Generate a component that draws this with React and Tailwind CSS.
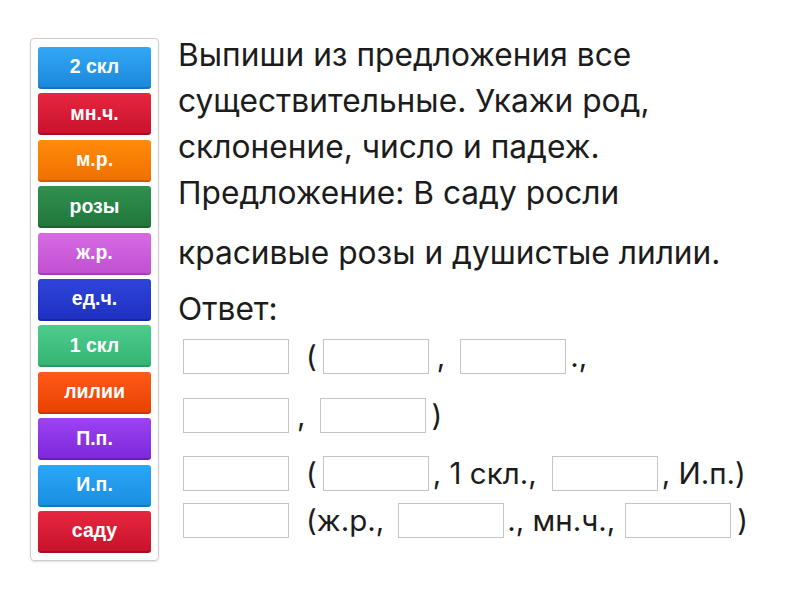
import React from "react";

const tiles = [
  { t: "2 скл", c: "bg-gradient-to-b from-[#33a8f5] to-[#1b88dc] border-[#1672bd]" },
  { t: "мн.ч.", c: "bg-gradient-to-b from-[#e8263f] to-[#c9122d] border-[#a80c24]" },
  { t: "м.р.", c: "bg-gradient-to-b from-[#ff8c0a] to-[#f07000] border-[#cc5e00]" },
  { t: "розы", c: "bg-gradient-to-b from-[#2f9150] to-[#22773c] border-[#1b6231]" },
  { t: "ж.р.", c: "bg-gradient-to-b from-[#d76ae4] to-[#c150d2] border-[#a63db6]" },
  { t: "ед.ч.", c: "bg-gradient-to-b from-[#2e44da] to-[#1f30c0] border-[#1a28a3]" },
  { t: "1 скл", c: "bg-gradient-to-b from-[#4ccd8e] to-[#35b574] border-[#2a9b61]" },
  { t: "лилии", c: "bg-gradient-to-b from-[#ff5a18] to-[#e84200] border-[#c63800]" },
  { t: "П.п.", c: "bg-gradient-to-b from-[#9c43f2] to-[#7f27dc] border-[#6a1dbd]" },
  { t: "И.п.", c: "bg-gradient-to-b from-[#2aa7f6] to-[#1a8fe2] border-[#1579c2]" },
  { t: "саду", c: "bg-gradient-to-b from-[#e8263f] to-[#c9122d] border-[#a80c24]" },
];

const Box = () => (
  <span className="inline-block w-[106px] h-[35px] border border-[#c4c4c4] bg-white align-middle shrink-0" />
);

export default function App() {
  return (
    <div className="w-[800px] h-[600px] bg-white relative overflow-hidden">
      <div className="flex items-start pt-[38px] pl-[30px]">
        <div className="w-[129px] h-[523px] border border-[#cccccc] rounded-[4px] shadow-[0_1px_2px_rgba(0,0,0,0.12)] px-[7px] pt-[8px] flex flex-col gap-[4.4px]">
          {tiles.map((x, i) => (
            <div
              key={i}
              className={`h-[42px] rounded-[3px] border-b-[2px] flex items-center justify-center text-white font-bold text-[19.5px] ${x.c}`}
              style={{ fontFamily: "'Liberation Sans', Arial, sans-serif" }}
            >
              {x.t}
            </div>
          ))}
        </div>
        <div
          className="ml-[19px] text-[#1c1c1c] text-[31.7px]"
          style={{ fontFamily: "Inter, 'Noto Sans', sans-serif" }}
        >
          <div className="leading-[46px] -mt-[6px]">
            <div>Выпиши из предложения все</div>
            <div>существительные. Укажи род,</div>
            <div>склонение, число и падеж.</div>
            <div>Предложение: В саду росли</div>
          </div>
          <div className="leading-[46px] mt-[14px]">красивые розы и душистые лилии.</div>
          <div className="leading-[46px] mt-[10px]">Ответ:</div>
          <div className="ml-[5px] flex flex-col text-[29.5px]">
            <div className="flex items-center h-[35px] mt-[7px]">
              <Box />
              <span className="ml-[17px] mr-[6px]">(</span>
              <Box />
              <span className="ml-[8px] mr-[15px]">,</span>
              <Box />
              <span className="ml-[4px]">.,</span>
            </div>
            <div className="flex items-center h-[35px] mt-[24px]">
              <Box />
              <span className="ml-[8px] mr-[14px]">,</span>
              <Box />
              <span className="ml-[6px]">)</span>
            </div>
            <div className="flex items-center h-[35px] mt-[23px]">
              <Box />
              <span className="ml-[17px] mr-[6px]">(</span>
              <Box />
              <span className="ml-[4px] mr-[15px]">, 1 скл.,</span>
              <Box />
              <span className="ml-[4px]">, И.п.)</span>
            </div>
            <div className="flex items-center h-[35px] mt-[12px]">
              <Box />
              <span className="ml-[17px] mr-[14px]">(ж.р.,</span>
              <Box />
              <span className="ml-[3px] mr-[10px]">., мн.ч.,</span>
              <Box />
              <span className="ml-[6px]">)</span>
            </div>
          </div>
        </div>
      </div>
    </div>
  );
}
